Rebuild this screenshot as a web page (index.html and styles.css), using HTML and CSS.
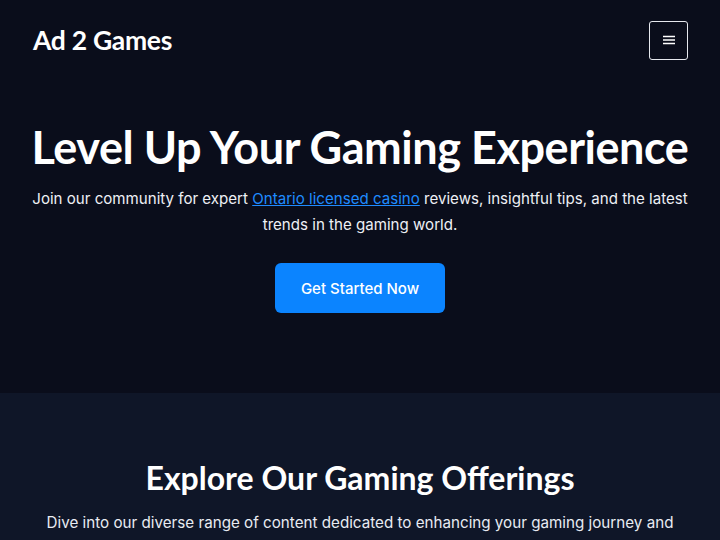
FILE: index.html
```html
<!DOCTYPE html>
<html lang="en">
<head>
<meta charset="utf-8">
<title>Ad 2 Games</title>
<link rel="stylesheet" href="styles.css">
</head>
<body>
<header class="site-header">
  <a class="logo" href="#">Ad 2 Games</a>
  <button class="menu-btn" aria-label="Menu">
    <svg width="12" height="10" viewBox="0 0 12 10"><path d="M0 1.5h12M0 5h12M0 8.5h12" stroke="#fff" stroke-width="1.3"/></svg>
  </button>
</header>
<section class="hero">
  <h1>Level Up Your Gaming Experience</h1>
  <p>Join our community for expert <a href="#">Ontario licensed casino</a> reviews, insightful tips, and the latest trends in the gaming world.</p>
  <a class="cta" href="#">Get Started Now</a>
</section>
<section class="offerings">
  <h2>Explore Our Gaming Offerings</h2>
  <p>Dive into our diverse range of content dedicated to enhancing your gaming journey and experience with the best reviews and guides.</p>
</section>
</body>
</html>
```
FILE: styles.css
```css
* { box-sizing: border-box; }
html, body { margin: 0; padding: 0; }
body {
  background: #0a0d1b;
  color: #fff;
  font-family: Inter, "Noto Sans", sans-serif;
  overflow: hidden;
}
.site-header {
  display: flex;
  justify-content: space-between;
  align-items: center;
  height: 80px;
  padding: 0 32px 0 33px;
}
.logo {
  color: #fff;
  text-decoration: none;
  font-family: Lato, sans-serif;
  font-weight: 700;
  font-size: 26.5px;
  letter-spacing: -0.3px;
}
.menu-btn {
  width: 39px;
  height: 39px;
  background: transparent;
  border: 1px solid #e6e8ee;
  border-radius: 3px;
  display: flex;
  align-items: center;
  justify-content: center;
  padding: 0;
}
.hero {
  text-align: center;
  padding: 38px 20px 80px;
  display: flex;
  flex-direction: column;
  align-items: center;
}
.hero h1 {
  margin: 0;
  font-family: Lato, sans-serif;
  font-weight: 700;
  font-size: 45px;
  line-height: 58px;
  letter-spacing: -0.45px;
}
.hero p {
  margin: 10px 0 0;
  font-size: 15.1px;
  line-height: 26px;
  color: #eef0f5;
  max-width: 680px;
}
.hero p a { color: #1f8bff; }
.cta {
  margin-top: 25px;
  display: inline-flex;
  align-items: center;
  justify-content: center;
  width: 170px;
  height: 50px;
  background: #0b84ff;
  color: #fff;
  border-radius: 6px;
  text-decoration: none;
  font-size: 15px;
  font-weight: 500;
}
.offerings {
  background: #0f1628;
  text-align: center;
  padding: 60px 30px 40px;
}
.offerings h2 {
  margin: 0;
  font-family: Lato, sans-serif;
  font-weight: 700;
  font-size: 32px;
  line-height: 50px;
}
.offerings p {
  margin: 7px auto 0;
  max-width: 660px;
  font-size: 15.2px;
  line-height: 26px;
  color: #e8ebf2;
}
```
